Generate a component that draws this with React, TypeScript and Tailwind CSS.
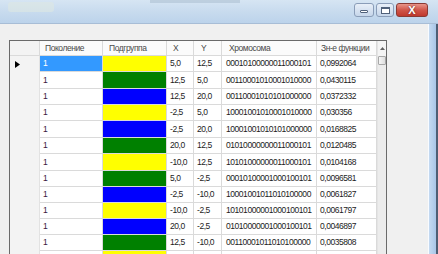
import React from 'react';

type Row = { x: string; y: string; c: string; f: string; g: string };

const rows: Row[] = [
  { x: '5,0', y: '12,5', c: '00010100000011000101', f: '0,0992064', g: 'bg-[#ffff00]' },
  { x: '12,5', y: '5,0', c: '00110001010001010000', f: '0,0430115', g: 'bg-[#008000]' },
  { x: '12,5', y: '20,0', c: '00110001010101000000', f: '0,0372332', g: 'bg-[#0000ff]' },
  { x: '-2,5', y: '5,0', c: '10001001010001010000', f: '0,030356', g: 'bg-[#ffff00]' },
  { x: '-2,5', y: '20,0', c: '10001001010101000000', f: '0,0168825', g: 'bg-[#0000ff]' },
  { x: '20,0', y: '12,5', c: '01010000000011000101', f: '0,0120485', g: 'bg-[#008000]' },
  { x: '-10,0', y: '12,5', c: '10101000000011000101', f: '0,0104168', g: 'bg-[#ffff00]' },
  { x: '5,0', y: '-2,5', c: '00010100001000100101', f: '0,0096581', g: 'bg-[#008000]' },
  { x: '-2,5', y: '-10,0', c: '10001001011010100000', f: '0,0061827', g: 'bg-[#0000ff]' },
  { x: '-10,0', y: '-2,5', c: '10101000001000100101', f: '0,0061797', g: 'bg-[#ffff00]' },
  { x: '20,0', y: '-2,5', c: '01010000001000100101', f: '0,0046897', g: 'bg-[#0000ff]' },
  { x: '12,5', y: '-10,0', c: '00110001011010100000', f: '0,0035808', g: 'bg-[#008000]' },
  { x: '', y: '', c: '', f: '', g: 'bg-[#ffff00]' },
];

const heights = [
  'h-[16px]', 'h-[17px]', 'h-[16px]', 'h-[16px]', 'h-[17px]', 'h-[16px]', 'h-[17px]',
  'h-[16px]', 'h-[16px]', 'h-[16px]', 'h-[16px]', 'h-[16px]', 'h-[16px]',
];

const cell = 'flex items-center border-r border-b border-[#dadada] pl-[3px] whitespace-nowrap overflow-hidden shrink-0';

export default function App() {
  return (
    <div className="w-[438px] h-[254px] overflow-hidden bg-[#f0f0f0] flex flex-col font-['Liberation_Sans',Arial,sans-serif] text-[8.5px] leading-none">
      {/* title bar */}
      <div className="h-[24px] shrink-0 flex items-start bg-gradient-to-b from-[#d6e5f3] via-[#c8dbee] to-[#bcd3eb] border-b border-[#a8bdd6]">
        <div className="flex-1 relative h-full">
          <div className="absolute left-[8px] top-[2px] w-[46px] h-[10px] rounded-[3px] bg-[#dde8e3] opacity-60" />
          <div className="absolute left-[150px] top-0 w-[90px] h-[3px] bg-[#a6b9cc] opacity-50" />
        </div>
        <div className="flex items-start pt-[3px] mr-[10px] gap-[2px]">
          <div className="w-[20px] h-[14px] rounded-[3px] border border-[#8a9db8] bg-gradient-to-b from-[#e8eff8] to-[#c6d6ea] flex items-center justify-center">
            <div className="w-[8px] h-[3px] bg-white border border-[#50617a] rounded-[1px] mt-[3px]" />
          </div>
          <div className="w-[18px] h-[14px] rounded-[3px] border border-[#8a9db8] bg-gradient-to-b from-[#e8eff8] to-[#c6d6ea] flex items-center justify-center">
            <div className="w-[9px] h-[7px] border border-[#50617a] border-t-2 bg-white" />
          </div>
          <div className="w-[32px] h-[14px] rounded-[3px] border border-[#8a3a34] bg-gradient-to-b from-[#e8958a] via-[#d0564a] to-[#c0392e] flex items-center justify-center">
            <span className="text-white font-bold text-[11px] font-['Liberation_Sans',Arial,sans-serif] [text-shadow:0_0_2px_#5a1a14]">X</span>
          </div>
        </div>
      </div>

      {/* body */}
      <div className="flex-1 flex min-h-0">
        <div className="flex-1 pl-[9px] pt-[16px] min-w-0">
          <div className="w-[378px] h-full flex border-l border-t border-r border-[#6a6a6a] bg-white overflow-hidden">
            <div className="flex flex-col w-[367px] shrink-0 tracking-[-0.45px]">
              {/* header */}
              <div className="flex h-[15px] shrink-0 bg-[#fbfbfb] text-[#4a4a4a]">
                <div className="w-[30px] shrink-0 border-r border-b border-[#dadada] bg-[#f3f3f3]" />
                <div className={`${cell} w-[63px] pl-[5px]`}>Поколение</div>
                <div className={`${cell} w-[64px] pl-[6px]`}>Подгруппа</div>
                <div className={`${cell} w-[27px] pl-[6px]`}>X</div>
                <div className={`${cell} w-[28px] pl-[7px]`}>Y</div>
                <div className={`${cell} w-[95px] pl-[7px]`}>Хромосома</div>
                <div className={`${cell} w-[60px] pl-[4px]`}>Зн-е функции</div>
              </div>
              {rows.map((r, i) => (
                <div key={i} className={`flex shrink-0 ${heights[i]} text-[#1c1c1c]`}>
                  <div className="w-[30px] shrink-0 bg-[#f3f3f3] border-r border-[#e2e2e2] flex items-center pl-[5px]">
                    {i === 0 && (
                      <svg width="5" height="7" viewBox="0 0 5 7">
                        <path d="M0 0 L5 3.5 L0 7 Z" fill="#000" />
                      </svg>
                    )}
                  </div>
                  <div className={`${cell} w-[63px] ${i === 0 ? 'bg-[#3399ff] text-white' : 'text-[#3a1840]'}`}>{r.x ? '1' : ''}</div>
                  <div className={`${cell} w-[64px] ${r.g}`} />
                  <div className={`${cell} w-[27px]`}>{r.x}</div>
                  <div className={`${cell} w-[28px]`}>{r.y}</div>
                  <div className={`${cell} w-[95px] pl-[4px]`}>{r.c}</div>
                  <div className={`${cell} w-[60px] pl-[2px]`}>{r.f}</div>
                </div>
              ))}
            </div>
            {/* scrollbar */}
            <div className="w-[9px] shrink-0 flex flex-col bg-[#ececec] border-l border-[#e4e4e4]">
              <div className="h-[15px] shrink-0 flex items-center justify-center bg-[#f4f4f4]">
                <svg width="5" height="3" viewBox="0 0 5 3">
                  <path d="M0 3 L2.5 0 L5 3 Z" fill="#606060" />
                </svg>
              </div>
              <div className="h-[9px] shrink-0 rounded-[1px] border border-[#a8a8a8] bg-gradient-to-r from-[#f6f6f6] to-[#dedede]" />
              <div className="flex-1" />
            </div>
          </div>
        </div>
        {/* right frame */}
        <div className="w-[10px] shrink-0 flex">
          <div className="w-[1px] bg-[#f8fbff]" />
          <div className="flex-1 bg-gradient-to-r from-[#c5daf1] to-[#a9c6e8]" />
          <div className="w-[2px] bg-[#4e5e74]" />
        </div>
      </div>
    </div>
  );
}
